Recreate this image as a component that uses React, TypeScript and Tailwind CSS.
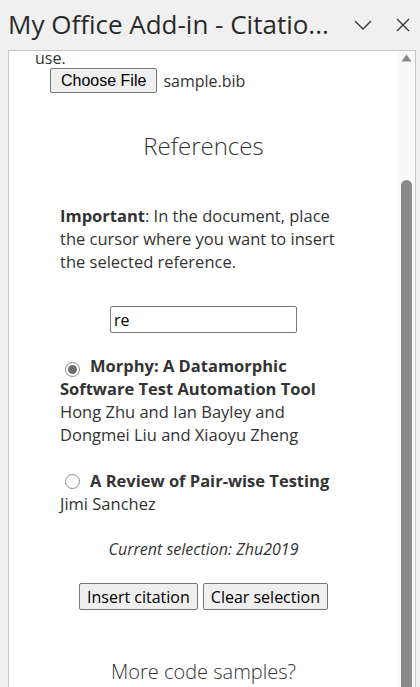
import React, { useState } from "react";

type Reference = {
  key: string;
  title: string;
  authors: string;
};

const references: Reference[] = [
  {
    key: "Zhu2019",
    title: "Morphy: A Datamorphic Software Test Automation Tool",
    authors: "Hong Zhu and Ian Bayley and Dongmei Liu and Xiaoyu Zheng",
  },
  {
    key: "Sanchez",
    title: "A Review of Pair-wise Testing",
    authors: "Jimi Sanchez",
  },
];

const font = { fontFamily: '"Open Sans", "Noto Sans", sans-serif' };

const Radio = ({ checked }: { checked: boolean }) => (
  <span className="inline-flex mr-[10px] h-[15px] w-[15px] rounded-full border border-[#8a8a8a] bg-white items-center justify-center align-[-2px]">
    {checked && <span className="h-[9px] w-[9px] rounded-full bg-[#6e6e6e]" />}
  </span>
);

const App = () => {
  const [search, setSearch] = useState("re");
  const [selected, setSelected] = useState("Zhu2019");

  return (
    <div
      className="h-[687px] w-[420px] bg-[#f0f0f0] overflow-hidden flex flex-col text-[#333]"
      style={font}
    >
      <header className="h-[50px] shrink-0 flex items-center pl-2 pr-[10px]">
        <h1 className="flex-1 text-[26px] leading-[32px] text-[#2b2b2b] whitespace-nowrap -mt-[2px]">
          My Office Add-in - Citatio...
        </h1>
        <svg width="18" height="10" viewBox="0 0 18 10" className="mr-[24px] ml-2">
          <path d="M1 1 L9 9 L17 1" fill="none" stroke="#333" strokeWidth="1.3" />
        </svg>
        <svg width="14" height="14" viewBox="0 0 14 14">
          <path d="M1 1 L13 13 M13 1 L1 13" fill="none" stroke="#333" strokeWidth="1.3" />
        </svg>
      </header>

      <div className="flex-1 ml-2 mr-1 border-l border-t border-r border-[#c6c6c6] bg-white flex overflow-hidden">
        <main className="flex-1 overflow-hidden">
          <p className="pl-[26px] -mt-[3px] text-[16px] leading-[20px]">use.</p>
          <div className="pl-[41px] flex items-center">
            <button
              className="h-[25px] px-[10px] bg-[#efefef] border border-[#767676] rounded-[2px] text-[16px] text-black"
              style={{ fontFamily: '"Liberation Sans", Arial, sans-serif' }}
            >
              Choose File
            </button>
            <span className="ml-[6px] text-[16px]">sample.bib</span>
          </div>

          <h2 className="mt-[38px] text-center text-[24px] font-light leading-[30px]">
            References
          </h2>

          <p className="mt-[43px] px-[51px] text-[16.5px] leading-[23px]">
            <b>Important</b>: In the document, place the cursor where you want to insert the
            selected reference.
          </p>

          <div className="mt-[33px] flex justify-center">
            <input
              value={search}
              onChange={(e) => setSearch(e.target.value)}
              className="h-[27px] w-[187px] border border-[#767676] rounded-[2px] px-[3px] text-[16px] text-black outline-none"
            />
          </div>

          <div className="mt-[21px] px-[51px]">
            {references.map((ref) => (
              <div
                key={ref.key}
                className="mb-[23px] text-[16.5px] leading-[23px] cursor-pointer"
                onClick={() => setSelected(ref.key)}
              >
                <span className="pl-[5px]">
                  <Radio checked={selected === ref.key} />
                </span>
                <b>{ref.title}</b>
                <div>{ref.authors}</div>
              </div>
            ))}
          </div>

          <p className="mt-[10px] text-center italic text-[16px] leading-[23px]">
            Current selection: {selected}
          </p>

          <div className="mt-[22px] flex justify-center gap-[5px]">
            <button className="h-[27px] px-[7px] bg-[#efefef] border border-[#767676] rounded-[2px] text-[16px] text-black">
              Insert citation
            </button>
            <button className="h-[27px] px-[7px] bg-[#efefef] border border-[#767676] rounded-[2px] text-[16px] text-black">
              Clear selection
            </button>
          </div>

          <h2 className="mt-[47px] text-center text-[20px] font-light leading-[30px]">
            More code samples?
          </h2>
        </main>

        <div className="w-[17px] shrink-0 bg-[#f9f9f9] flex flex-col items-center">
          <svg width="11" height="8" viewBox="0 0 11 8" className="mt-[3px]">
            <path d="M5.5 0.5 L10.5 7.5 L0.5 7.5 Z" fill="#8a8a8a" />
          </svg>
          <div className="mt-[118px] w-[11px] flex-1 bg-[#8a8a8a] rounded-t-full" />
        </div>
      </div>
    </div>
  );
};

export default App;
